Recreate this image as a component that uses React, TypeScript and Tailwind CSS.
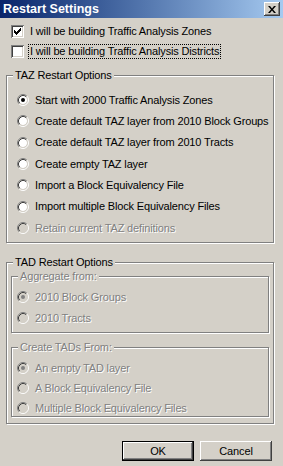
import React from "react";

const FACE = "#d4d0c8";

function Radio({ checked, disabled }: { checked?: boolean; disabled?: boolean }) {
    return (
        <svg width="12" height="12" viewBox="0 0 12 12" className="shrink-0">
            <circle cx="6" cy="6" r="4" fill={disabled ? FACE : "#fff"} />
            <path d="M2.11 9.89 A5.5 5.5 0 0 1 9.89 2.11" stroke="#808080" fill="none" />
            <path d="M9.89 2.11 A5.5 5.5 0 0 1 2.11 9.89" stroke="#fff" fill="none" />
            <path d="M2.82 9.18 A4.5 4.5 0 0 1 9.18 2.82" stroke="#404040" fill="none" />
            <path d="M9.18 2.82 A4.5 4.5 0 0 1 2.82 9.18" stroke={FACE} fill="none" />
            {checked && <circle cx="6" cy="6" r="2" fill={disabled ? "#808080" : "#000"} />}
        </svg>
    );
}

function RadioRow({ label, checked, disabled }: { label: string; checked?: boolean; disabled?: boolean }) {
    return (
        <div className="flex items-center h-[16px] gap-[6px]">
            <Radio checked={checked} disabled={disabled} />
            <span className={disabled ? "text-[#808080] [text-shadow:1px_1px_0_#fff]" : "text-black"}>{label}</span>
        </div>
    );
}

function Checkbox({ checked }: { checked?: boolean }) {
    return (
        <div className="w-[13px] h-[13px] bg-white shrink-0 flex items-center justify-center shadow-[inset_1px_1px_0_#808080,inset_-1px_-1px_0_#fff,inset_2px_2px_0_#404040,inset_-2px_-2px_0_#d4d0c8]">
            {checked && (
                <svg width="7" height="7" viewBox="0 0 7 7">
                    <path d="M0 2h1v1h1v1h1v-1h1v-1h1v-1h1v-1h1v3h-1v1h-1v1h-1v1h-1v1h-1v-1h-1v-1h-1z" fill="#000" />
                </svg>
            )}
        </div>
    );
}

function Group({ title, disabled, className, children }: { title: string; disabled?: boolean; className?: string; children: React.ReactNode }) {
    return (
        <div className={"relative border border-[#808080] shadow-[1px_1px_0_#fff,inset_1px_1px_0_#fff] " + (className ?? "")}>
            <span
                className={
                    "absolute -top-[8px] left-[6px] px-[2px] bg-[#d4d0c8] leading-[14px] " +
                    (disabled ? "text-[#808080] [text-shadow:1px_1px_0_#fff]" : "text-black")
                }
            >
                {title}
            </span>
            {children}
        </div>
    );
}

function Button({ label, isDefault }: { label: string; isDefault?: boolean }) {
    const raised = "shadow-[inset_-1px_-1px_0_#404040,inset_1px_1px_0_#fff,inset_-2px_-2px_0_#808080]";
    return (
        <div className={"w-[72px] h-[20px] " + (isDefault ? "border border-black" : "")}>
            <div className={"w-full h-full flex items-center justify-center bg-[#d4d0c8] " + raised}>{label}</div>
        </div>
    );
}

export default function App() {
    return (
        <div className="w-[283px] h-[466px] bg-[#d4d0c8] text-[11px] tracking-[-0.15px] whitespace-nowrap text-black overflow-hidden font-['Liberation_Sans',Arial,sans-serif]">
            {/* title bar */}
            <div className="h-[18px] flex items-center justify-between pl-[3px] pr-[3px] bg-gradient-to-r from-[#0a246a] to-[#a6caf0]">
                <span className="text-white font-bold text-[12.5px] tracking-normal">Restart Settings</span>
                <div className="w-[16px] h-[14px] bg-[#d4d0c8] flex items-center justify-center shadow-[inset_-1px_-1px_0_#404040,inset_1px_1px_0_#fff,inset_-2px_-2px_0_#808080]">
                    <svg width="8" height="7" viewBox="0 0 8 7">
                        <path d="M0 0h2l2 2.5 2-2.5h2l-3 3.5 3 3.5h-2l-2-2.5-2 2.5h-2l3-3.5z" fill="#000" />
                    </svg>
                </div>
            </div>

            {/* checkboxes */}
            <div className="pt-[3px] pl-[11px]">
                <div className="flex items-center h-[20px] gap-[5px]">
                    <Checkbox checked />
                    <span className="px-[1px]">I will be building Traffic Analysis Zones</span>
                </div>
                <div className="flex items-center h-[20px] gap-[4px]">
                    <Checkbox />
                    <span className="px-[1px] leading-[13px] border border-dotted border-black">I will be building Traffic Analysis Districts</span>
                </div>
            </div>

            {/* TAZ */}
            <Group title="TAZ Restart Options" className="mt-[14px] mx-[6px] w-[268px] pt-[16px] pb-[6px] pl-[10px]">
                <div className="flex flex-col gap-[5.33px]">
                    <RadioRow label="Start with 2000 Traffic Analysis Zones" checked />
                    <RadioRow label="Create default TAZ layer from 2010 Block Groups" />
                    <RadioRow label="Create default TAZ layer from 2010 Tracts" />
                    <RadioRow label="Create empty TAZ layer" />
                    <RadioRow label="Import a Block Equivalency File" />
                    <RadioRow label="Import multiple Block Equivalency Files" />
                    <RadioRow label="Retain current TAZ definitions" disabled />
                </div>
            </Group>

            {/* TAD */}
            <Group title="TAD Restart Options" className="mt-[19px] mx-[6px] w-[268px] pt-[13px] pb-[6px] px-[4px]">
                <Group title="Aggregate from:" disabled className="pt-[12px] pb-[6px] pl-[5px]">
                    <div className="flex flex-col gap-[5px]">
                        <RadioRow label="2010 Block Groups" checked disabled />
                        <RadioRow label="2010 Tracts" disabled />
                    </div>
                </Group>
                <Group title="Create TADs From:" disabled className="mt-[14px] pt-[12px] pl-[5px]">
                    <div className="flex flex-col gap-[4px]">
                        <RadioRow label="An empty TAD layer" checked disabled />
                        <RadioRow label="A Block Equivalency File" disabled />
                        <RadioRow label="Multiple Block Equivalency Files" disabled />
                    </div>
                </Group>
            </Group>

            {/* buttons */}
            <div className="mt-[17px] flex justify-end gap-[6px] pr-[11px]">
                <Button label="OK" isDefault />
                <Button label="Cancel" />
            </div>
        </div>
    );
}
